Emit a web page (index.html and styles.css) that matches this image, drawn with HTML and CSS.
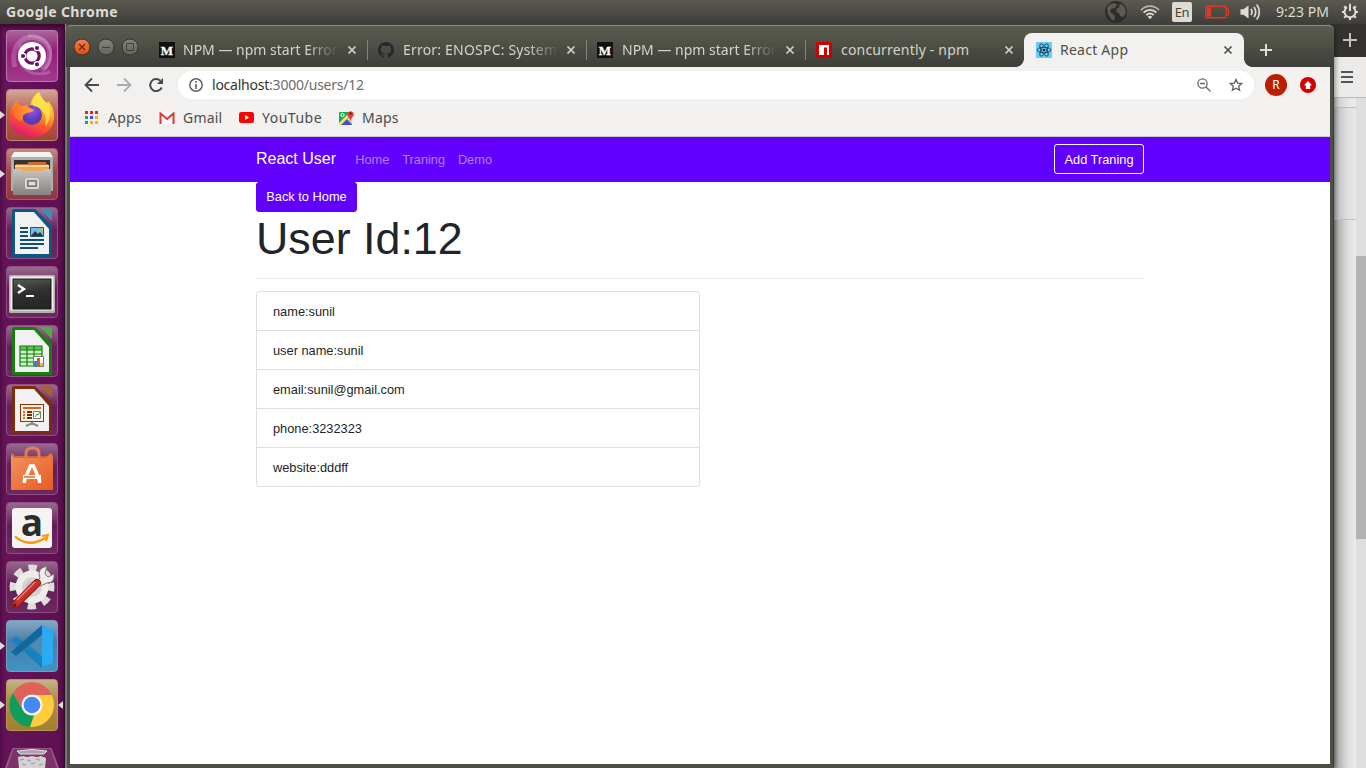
FILE: index.html
```html
<!DOCTYPE html>
<html lang="en">
<head>
<meta charset="utf-8">
<title>React App</title>
<link rel="stylesheet" href="styles.css">
</head>
<body>
<div class="desktop">
  <header class="panel">
    <span class="panel-title">Google Chrome</span>
    <div class="indicators">
      <svg class="ind-globe" width="22" height="22" viewBox="0 0 22 22"><circle cx="11" cy="11" r="11" fill="#2d2c29"/><path d="M2 7l3-4 5-1 2 2-2 3-4 1-1 3 3 2 2 2-1 5-3-2-3-5zM13 4l4-1 3 4 1 5-3 4-3-1-1-3-3-1 1-4 3-1z" fill="#5a5954"/></svg>
      <svg class="ind-wifi" width="20" height="16" viewBox="0 0 20 16" fill="none" stroke-linecap="butt"><path d="M1 6.2C6 .8 14 .8 19 6.2" stroke="#b9b5aa" stroke-width="1.7"/><path d="M3.6 8.7c3.6-3.8 9.2-3.8 12.8 0" stroke="#dfdbd2" stroke-width="1.9"/><path d="M6.3 11.2c2.2-2.1 5.2-2.1 7.4 0" stroke="#dfdbd2" stroke-width="1.8"/><path d="M7.7 12.7Q10 11 12.300 12.700L10 15.200z" fill="#dfdbd2"/></svg>
      <span class="ind-lang">En</span>
      <svg class="ind-battery" width="24" height="14" viewBox="0 0 24 14"><rect x=".8" y="1.200" width="20.400" height="11.600" rx="1" fill="none" stroke="#e0382b" stroke-width="1.400"/><path d="M2 2.500h4v9H2z" fill="#e0382b"/><path d="M21 4h1.500q1 0 1 1v4q0 1-1 1H21" fill="none" stroke="#e0382b" stroke-width="1.300"/></svg>
      <svg class="ind-sound" width="21" height="18" viewBox="0 0 21 18"><path d="M.5 6.300h3L8.500 2.500v13l-5-3.800h-3z" fill="#dfdbd2"/><path d="M11 6q2 3 0 6M14 4q3.500 5 0 10M16.800 1.500q5 7.500 0 15" fill="none" stroke="#dfdbd2" stroke-width="1.700"/></svg>
      <span class="clock">9:23 PM</span>
      <svg class="ind-gear" width="18" height="18" viewBox="0 0 18 18" fill="none"><g stroke="#dfdbd2" stroke-width="2.200"><path d="M9 14.500v2.500M1 9h2.500M14.500 9H17M3.200 3.200L5 5M13 5l1.800-1.800M3.200 14.800L5 13M13 13l1.800 1.800"/><path d="M6 4.200a5.500 5.500 0 1 0 6 0" stroke-width="2"/><path d="M9 .8V8" stroke-width="2"/></g></svg>
    </div>
  </header>
  <div class="session">
    <nav class="launcher">
      <div class="tile ubuntu"><svg viewBox="0 0 52 52"><g fill="none" stroke="#fff" stroke-opacity=".2"><path stroke-width="5" d="M9 37C3 14 20 2 35 10c14 7 8 25 1 30"/><path stroke-width="3" d="M15 15c-8 20 9 34 29 27M22 6c22-3 29 21 17 33"/></g><circle cx="26" cy="26" r="14" fill="#fff"/><circle cx="26" cy="26" r="7.200" fill="none" stroke="#71135f" stroke-width="3.200"/><g fill="#71135f" stroke="#fff" stroke-width="1.200"><circle cx="17" cy="26" r="2.700"/><circle cx="31" cy="18" r="2.700"/><circle cx="31" cy="34.300" r="2.700"/></g></svg></div>
      <div class="tile firefox running"><svg viewBox="0 0 52 52"><defs><linearGradient id="ff" x1=".8" y1="0" x2=".35" y2="1"><stop stop-color="#fff04f"/><stop offset=".35" stop-color="#ffb52e"/><stop offset=".65" stop-color="#ff592c"/><stop offset="1" stop-color="#e31573"/></linearGradient><linearGradient id="fox" x2="1"><stop stop-color="#ff6d2f"/><stop offset="1" stop-color="#ffa824"/></linearGradient><radialGradient id="fp" cy=".3"><stop stop-color="#9653f5"/><stop offset="1" stop-color="#593db5"/></radialGradient></defs><path d="M11 11q1 4 4 6l9-1q2-9 9-13 2 7 8 11l1-2q7 7 6 18C47 41 38 48 26 48S3 40 3 29q0-9 5-13z" fill="url(#ff)"/><circle cx="26" cy="26" r="10" fill="url(#fp)"/><path d="M11 11q1 5 5 7 6-2 8 1l4 2q-1 2-7 3-3 1-4 3 0 4-2 5-7-2-8-10z" fill="url(#fox)"/><path d="M33 3q3 8 10 13 4 12-4 22 2-8-1-14-3-6-11-7-3-7 6-14z" fill="#ffe54a" opacity=".85"/></svg></div>
      <div class="tile files running"><svg viewBox="0 0 52 52"><defs><linearGradient id="fm" x2="0" y2="1"><stop stop-color="#c6c4c2"/><stop offset="1" stop-color="#858381"/></linearGradient></defs><path d="M8 4h36l3 5H5z" fill="#f4f3f1"/><path d="M5 9h42v34H5z" fill="#b1afac"/><path d="M8 12h36v12H8z" fill="#34332f"/><path d="M10 16h11l2-2h17v2h2v7H10z" fill="#d36a30"/><path d="M9 17h34v2H9z" fill="#ffdda0"/><path d="M9 19h34v4H9z" fill="#f4a650"/><path d="M7 21h8l2 2h19l2-2h7v26H7z" fill="url(#fm)"/><rect x="20" y="31" width="12" height="9" rx="1" fill="none" stroke="#d8d6d4" stroke-width="2"/><rect x="22" y="33" width="8" height="5" fill="#ddd" stroke="#555" stroke-width="1"/></svg></div>
      <div class="tile office"><svg viewBox="0 0 52 52"><path d="M8 2h21l17 17v29q0 2-2 2H8q-2 0-2-2V4q0-2 2-2z" fill="#0b5788"/><path d="M34 2h10q2 0 2 2v10z" fill="#3a8fba"/><path d="M9 5h19l15 17v25H9z" fill="#f1f1f1"/><path d="M14 21h8M14 25h8M14 29h8M14 33h24M14 37h24M14 41h18" stroke="#0d4f78" stroke-width="2"/><path d="M24.500 20.500h13v9h-13z" fill="#79bce8" stroke="#135680"/><path d="M25 29l4-5 3 3 2-2 3 4z" fill="#333"/><path d="M34 21h3v3z" fill="#d9c832"/></svg></div>
      <div class="tile office"><svg viewBox="0 0 52 52"><defs><linearGradient id="tb" y2="1" x2=".2"><stop stop-color="#5b5b59"/><stop offset=".5" stop-color="#30302f"/><stop offset="1" stop-color="#262626"/></linearGradient></defs><rect x="3" y="9" width="46" height="38" rx="1.500" fill="#b2b1af"/><rect x="4.500" y="10.500" width="43" height="34" fill="#f1f1ef"/><rect x="7" y="13" width="38" height="30" fill="url(#tb)" stroke="#171717"/><path d="M12 19l6 4-6 4" fill="none" stroke="#fff" stroke-width="2.400"/><path d="M20 30h8" stroke="#fff" stroke-width="2"/></svg></div>
      <div class="tile office"><svg viewBox="0 0 52 52"><path d="M8 2h21l17 17v29q0 2-2 2H8q-2 0-2-2V4q0-2 2-2z" fill="#16800f"/><path d="M34 2h10q2 0 2 2v10z" fill="#4caf3c"/><path d="M9 5h19l15 17v25H9z" fill="#f1f1f1"/><path d="M14 21h22v20H14z" fill="#c9f7c3"/><path d="M14 21h22v4H14z" fill="#5ec653"/><path d="M14 21h22v20H14zM14 25h22M14 29h22M14 33h22M14 37h22M21 21v20M28 21v20" fill="none" stroke="#137a0d" stroke-width="1.200"/><path d="M27.500 31.500h10v10h-10z" fill="#fff" stroke="#777"/><path d="M28 36h3v5h-3z" fill="#2b87d2"/><path d="M31 33h3v8h-3z" fill="#d65d1c"/><path d="M34 38h3v3h-3z" fill="#f4be23"/></svg></div>
      <div class="tile office"><svg viewBox="0 0 52 52"><path d="M8 2h21l17 17v29q0 2-2 2H8q-2 0-2-2V4q0-2 2-2z" fill="#7e2d08"/><path d="M34 2h10q2 0 2 2v10z" fill="#ae5d31"/><path d="M9 5h19l15 17v25H9z" fill="#f1f1f1"/><rect x="14.500" y="20.500" width="23" height="17" fill="#fff2e6" stroke="#8e3308"/><path d="M17 24h18" stroke="#d36424" stroke-width="2"/><path d="M17 28h2M17 31h2M17 34h2" stroke="#e0682b" stroke-width="2"/><path d="M21 28h5M21 31h5M21 34h5" stroke="#7c2d08" stroke-width="2"/><path d="M27.500 27.500h7v7h-7z" fill="#fff" stroke="#777"/><path d="M29 33l2-3 1 1 2-3" fill="none" stroke="#35a53c"/><path d="M26 38v3M20 42l6-3 6 3" stroke="#888" stroke-width="2" fill="none"/></svg></div>
      <div class="tile office"><svg viewBox="0 0 52 52"><defs><linearGradient id="bag" x2="1" y2="1"><stop stop-color="#f29460"/><stop offset="1" stop-color="#e75b22"/></linearGradient></defs><path d="M5 10l4 3h31l5-3 2 4v33H5z" fill="url(#bag)"/><path d="M5 11l3 3h31l5-3" fill="none" stroke="#b84a1d"/><path d="M20 18V11q0-6 6-6h1q6 0 6 6v7" fill="none" stroke="#e57f51" stroke-width="2.800"/><path d="M18.500 40v-3l6-14h3l6 14v3" fill="none" stroke="#fff" stroke-width="3.500"/><path d="M17 34h18" stroke="#fff" stroke-width="4"/><path d="M18 34h11" stroke="#ef5e22" stroke-width="1.500"/></svg></div>
      <div class="tile office"><svg viewBox="0 0 52 52"><rect x="6" y="6" width="40" height="40" rx="3" fill="#f5f4f2"/><text class="amazon-a" x="26" y="34">a</text><path d="M9 34.500q14 12 31 1" fill="none" stroke="#ff9300" stroke-width="2.300"/><path d="M36 34l6-1-2 6" fill="none" stroke="#ff9300" stroke-width="2"/></svg></div>
      <div class="tile office"><svg viewBox="0 0 52 52"><circle cx="26" cy="26" r="19" fill="none" stroke="#deddda" stroke-width="7" stroke-dasharray="8 6.920" transform="rotate(-12 26 26)"/><circle cx="26" cy="26" r="16.500" fill="#eeedea"/><circle cx="26" cy="26" r="10" fill="#d5d3d0"/><circle cx="26" cy="26" r="6" fill="#cbb7c7"/><path d="M34 17q-4-9 7-12l-2 8 3 3 6-3q1 9-7 9l-7 3-5-3z" fill="#eeedea" stroke="#777"/><path d="M31 22L10 43" stroke="#8e1713" stroke-width="8" stroke-linecap="round"/><path d="M31 22L10 43" stroke="#c8302a" stroke-width="6" stroke-linecap="round"/><path d="M29 21L11 39" stroke="#ef837d" stroke-width="1.500"/><circle cx="9" cy="44" r="1.600" fill="#681310"/></svg></div>
      <div class="tile vscode running"><svg viewBox="0 0 52 52"><path d="M5 20l5-4 29 23-3 9z" fill="#1681bf"/><path d="M5 32l5 4 28-23-2-8z" fill="#12679c"/><path d="M36 5l11 5v33l-11 4z" fill="#2baaf0"/><path d="M36 17L25 26l11 9z" fill="#4c8cb5"/></svg></div>
      <div class="tile chrome running focused"><svg viewBox="0 0 52 52"><circle cx="26" cy="26" r="22" fill="#ffcc3e"/><path d="M7 14A22 22 0 0 1 46 16H26L17 31z" fill="#df625a"/><path d="M7 14l10 17q4 6 11 5l-4 12A22 22 0 0 1 7 14z" fill="#109c59"/><circle cx="26" cy="26" r="10.500" fill="#f6f6f6"/><circle cx="26" cy="26" r="8.300" fill="#4688f2"/></svg></div>
      <div class="trash"><svg width="54" height="21" viewBox="0 0 54 21"><path d="M7.500 1h39L54 21H0z" fill="#9b5b8a"/><path d="M8.500 2h37L52 21H2z" fill="#793468"/><path d="M12 4q15-3 30 0l-3 3H15z" fill="#a9a4a8" stroke="#e5e1e4"/><path d="M13 10l5-1 4 1 5-1 5 1 4-1 5 2-1 10H14z" fill="#d5d1d5"/><path d="M15 13l4-1M22 13l4 1M31 12l4 1M17 17l4 1M26 17l4-1M34 18l4-1" stroke="#aaa5a9" stroke-width="1.500"/></svg></div>
    </nav>
    <main class="workspace">
      <aside class="back-window"><div class="back-tabs"><svg width="14" height="14"><path d="M7 0v14M0 7h14" stroke="#c2c1bd" stroke-width="2"/></svg></div><div class="back-toolbar"><svg width="12" height="12"><path d="M0 1h12M0 6h12M0 11h12" stroke="#555" stroke-width="1.800"/></svg></div><div class="back-page"><div class="back-content"></div><div class="scrollbar"><div class="thumb"></div></div></div></aside>
      <section class="window">
        <div class="tabstrip">
          <div class="controls"><svg width="64" height="18" viewBox="0 0 64 18"><defs><linearGradient id="close" y2="1" x2="0"><stop stop-color="#f68058"/><stop offset="1" stop-color="#df4b0b"/></linearGradient><linearGradient id="ctl" y2="1" x2="0"><stop stop-color="#85857d"/><stop offset="1" stop-color="#62635c"/></linearGradient></defs><circle cx="8" cy="9" r="8" fill="url(#close)" stroke="#373530"/><g stroke="#373530"><circle cx="32" cy="9" r="8" fill="url(#ctl)"/><circle cx="56" cy="9" r="8" fill="url(#ctl)"/></g><path d="M5 6l6 6M11 6l-6 6" stroke="#64290f" stroke-width="1.300"/><path d="M28 9.500h8M52.500 5.500h7v7h-7z" fill="none" stroke="#3f403a"/></svg></div>
          <div class="tab"><svg class="favicon" viewBox="0 0 16 16"><rect width="16" height="16" fill="#11120f"/><text class="medium-m" x="8" y="12.500">M</text></svg><span class="tab-label">NPM — npm start Error</span><svg class="tab-close" viewBox="0 0 10 10"><path d="M1.500 1.500l7 7M8.500 1.500l-7 7"/></svg></div>
          <div class="tab"><svg class="favicon" viewBox="0 0 16 16"><path fill="#25292c" d="M8 0C3.600 0 0 3.600 0 8c0 3.500 2.300 6.500 5.500 7.600.4.100.5-.2.500-.4v-1.400c-2.200.5-2.700-1-2.700-1-.4-.9-.9-1.200-.9-1.200-.7-.5.100-.5.100-.5.800.1 1.200.8 1.200.8.700 1.300 1.900.9 2.300.7.100-.5.300-.9.500-1.100-1.800-.2-3.600-.9-3.600-4 0-.9.300-1.600.8-2.200-.1-.2-.4-1 .1-2.100 0 0 .7-.2 2.200.8a7.500 7.500 0 0 1 4 0c1.500-1 2.200-.8 2.200-.8.400 1.100.2 1.900.1 2.100.5.600.8 1.300.8 2.200 0 3.100-1.900 3.800-3.700 4 .3.200.6.700.6 1.500v2.200c0 .2.100.5.500.4A8 8 0 0 0 8 0z"/></svg><span class="tab-label system">Error: ENOSPC: System</span><svg class="tab-close" viewBox="0 0 10 10"><path d="M1.500 1.500l7 7M8.500 1.500l-7 7"/></svg></div>
          <div class="tab"><svg class="favicon" viewBox="0 0 16 16"><rect width="16" height="16" fill="#11120f"/><text class="medium-m" x="8" y="12.500">M</text></svg><span class="tab-label third">NPM — npm start Error</span><svg class="tab-close" viewBox="0 0 10 10"><path d="M1.500 1.500l7 7M8.500 1.500l-7 7"/></svg></div>
          <div class="tab last"><svg class="favicon" viewBox="0 0 16 16"><rect width="16" height="16" fill="#cb0000"/><path d="M3 3h10v10h-2V5.500H8V13H3z" fill="#fff"/></svg><span class="tab-label full">concurrently - npm</span><svg class="tab-close" viewBox="0 0 10 10"><path d="M1.500 1.500l7 7M8.500 1.500l-7 7"/></svg></div>
          <div class="tab active"><svg class="favicon" viewBox="0 0 16 16"><rect width="16" height="16" rx="1" fill="#61cffa"/><g fill="none" stroke="#20323b" stroke-width=".8"><ellipse cx="8" cy="8" rx="7" ry="2.700"/><ellipse cx="8" cy="8" rx="7" ry="2.700" transform="rotate(60 8 8)"/><ellipse cx="8" cy="8" rx="7" ry="2.700" transform="rotate(120 8 8)"/></g><circle cx="8" cy="8" r="1.300" fill="#20323b"/></svg><span class="tab-label full react">React App</span><svg class="tab-close" viewBox="0 0 10 10"><path d="M1.500 1.500l7 7M8.500 1.500l-7 7"/></svg></div>
          <svg class="new-tab" width="12" height="12"><path d="M6 0v12M0 6h12" stroke="#deddd3" stroke-width="2"/></svg>
        </div>
        <div class="toolbar">
          <svg class="nav-arrow" width="16" height="16" viewBox="0 0 16 16"><path d="M15 8H2M8 1.500L1.500 8 8 14.500" fill="none" stroke="#494949" stroke-width="1.800"/></svg>
          <svg class="nav-arrow" width="16" height="16" viewBox="0 0 16 16"><path d="M1 8h13M8 1.500L14.500 8 8 14.500" fill="none" stroke="#acacac" stroke-width="1.800"/></svg>
          <svg class="reload" width="16" height="16" viewBox="0 0 16 16"><path d="M13.700 10.500A6 6 0 1 1 12.300 3.700" fill="none" stroke="#494949" stroke-width="2"/><path d="M15 1v6H9z" fill="#494949"/></svg>
          <div class="address"><svg width="14" height="14" viewBox="0 0 14 14"><circle cx="7" cy="7" r="6.200" fill="none" stroke="#646464" stroke-width="1.500"/><path d="M7 3v1.800M7 6v5" stroke="#646464" stroke-width="1.600"/></svg><span class="url"><b>localhost</b>:3000/users/12</span><svg class="zoom-icon" width="15" height="15" viewBox="0 0 15 15" fill="none" stroke="#696969"><circle cx="5.500" cy="5.500" r="4.600" stroke-width="1.300"/><path d="M3 5.500h5M9 9l4.500 4.500" stroke-width="1.400"/></svg><svg width="14" height="14" viewBox="0 0 14 14"><path d="M7 1.500l1.700 3.700 4 .4-3 2.700.9 4L7 10.300l-3.600 2 .9-4-3-2.700 4-.4z" fill="none" stroke="#5f5f5f" stroke-width="1.300"/></svg></div>
          <span class="avatar">R</span>
          <svg class="update" width="16" height="16" viewBox="0 0 16 16"><circle cx="8" cy="8" r="8" fill="#d40000"/><path d="M8 4l4 4.200H10.200V12H5.800V8.200H4z" fill="#fff"/></svg>
        </div>
        <div class="bookmarks">
          <div class="bookmark apps"><svg width="13" height="13" viewBox="0 0 13 13"><path d="M0 0h3v3H0zM5 0h3v3H5zM10 0h3v3h-3z" fill="#ed2027"/><path d="M0 5h3v3H0zM0 10h3v3H0z" fill="#12ad54"/><path d="M5 5h3v3H5z" fill="#5b3cff"/><path d="M10 5h3v3h-3zM5 10h3v3H5zM10 10h3v3h-3z" fill="#edb900"/></svg><span>Apps</span></div>
          <div class="bookmark gmail"><svg width="16" height="12" viewBox="0 0 16 12"><path d="M1 0h14v12H1z" fill="#fafafa"/><path d="M1.500 12V1.500L8 7l6.500-5.500V12" fill="none" stroke="#db3a32" stroke-width="2"/></svg><span>Gmail</span></div>
          <div class="bookmark youtube"><svg width="15" height="11" viewBox="0 0 15 11"><rect width="15" height="11" rx="2.500" fill="#f00"/><path d="M6 3l4 2.500L6 8z" fill="#fff"/></svg><span>YouTube</span></div>
          <div class="bookmark maps"><svg width="16" height="16" viewBox="0 0 16 16"><rect x="0" y="2" width="13" height="13" rx="1" fill="#1aab55"/><path d="M2 15l5-6 6 6z" fill="#5146d7"/><path d="M0 13L11 2h2v2L2 15H0z" fill="#f5e565"/><path d="M8 9l5 5V7z" fill="#ddd"/><circle cx="3.500" cy="5" r="1.600" fill="none" stroke="#fff"/><path d="M11.500 12Q11 8 8.700 6a3.200 3.200 0 1 1 5.600 0q-2.300 2-2.800 6z" fill="#e83a31"/><circle cx="11.500" cy="3.500" r="1.200" fill="#8f1519"/></svg><span>Maps</span></div>
        </div>
        <div class="page">
          <nav class="navbar"><div class="container nav-row"><a class="brand">React User</a><a class="link">Home</a><a class="link">Traning</a><a class="link">Demo</a><button class="btn outline">Add Traning</button></div></nav>
          <div class="container"><button class="btn primary">Back to Home</button><h1>User Id:12</h1><hr><ul class="details"><li>name:sunil</li><li>user name:sunil</li><li>email:sunil@gmail.com</li><li>phone:3232323</li><li>website:dddff</li></ul></div>
        </div>
      </section>
    </main>
  </div>
</div>
</body>
</html>
```
FILE: styles.css
```css
* { box-sizing: border-box; }
body { margin: 0; overflow: hidden; font-family: "Noto Sans", sans-serif; font-size: 14px; }
svg { display: block; flex: none; }
.desktop { width: 1366px; height: 768px; display: flex; flex-direction: column; overflow: hidden; }
.panel { height: 24px; flex: none; display: flex; align-items: center; justify-content: space-between; padding: 0 7px 0 6px; background: linear-gradient(#5b5a50, #3e3d39); color: #dfdbd2; }
.panel-title { font-weight: 700; font-size: 14px; letter-spacing: .34px; padding-bottom: 2px; }
.indicators { display: flex; align-items: center; }
.ind-wifi { margin-left: 13px; }
.ind-lang { width: 20px; height: 20px; line-height: 21px; margin-left: 12px; border-radius: 2px; background: #dfdbd2; color: #45433d; font-size: 13px; text-align: center; letter-spacing: -.4px; }
.ind-battery { margin-left: 13px; }
.ind-sound { margin-left: 11px; }
.clock { margin-left: 15px; width: 54px; font-size: 14px; letter-spacing: .05px; padding-bottom: 2px; white-space: nowrap; }
.ind-gear { margin-left: 11px; }
.session { flex: 1; min-height: 0; display: flex; }
.launcher { width: 64px; flex: none; padding: 6px 6px 0; display: flex; flex-direction: column; gap: 7px; overflow: hidden; background: linear-gradient(90deg, #65145a, #5e1051); box-shadow: inset 0 3px 5px #35072b; }
.tile { position: relative; width: 52px; height: 52px; flex: none; border: 1px solid #8d5080; border-radius: 4px; background: linear-gradient(#98698e, #641d56 45%, #6d2861); }
.tile svg { width: 52px; height: 52px; margin: -1px; }
.amazon-a { font: 700 37px "Open Sans", sans-serif; text-anchor: middle; fill: #2c2c2c; }
.ubuntu { background: linear-gradient(#a8659c, #941c7b 40%, #a13a8c); border-color: #ba78af; }
.firefox { background: linear-gradient(#d4a79c, #b45e4e 45%, #a24738); border-color: #c38470; }
.files { background: linear-gradient(#bd8d8c, #9c474a 45%, #903841); border-color: #a9595f; }
.vscode { background: linear-gradient(#87a8c2, #487ea9 40%, #4293c2); border-color: #759ebf; }
.chrome { background: linear-gradient(#c4b486, #aa8d4c 40%, #a28032); border-color: #b99b50; }
.running::before, .focused::after { content: ""; position: absolute; top: 21px; border: 4px solid transparent; }
.running::before { left: -7px; border-left: 5px solid #ded9dc; border-right: 0; }
.focused::after { right: -6px; border-right: 5px solid #ded9dc; border-left: 0; }
.trash { height: 21px; margin: 9px 0 0 -1px; flex: none; }
.workspace { position: relative; flex: 1; min-width: 0; background: linear-gradient(90deg, #3d1337 0 1px, #9a949a 1px 2px, #50514c 2px); overflow: hidden; }
.back-window { position: absolute; top: 0; right: 0; width: 36px; height: 744px; display: flex; flex-direction: column; background: #e8e8e8; }
.back-tabs { height: 33px; flex: none; padding: 9px 0 0 13px; background: #34332f; }
.back-toolbar { height: 41px; flex: none; padding: 14px 0 0 11px; background: #ecebea; border-bottom: 1px solid #b9b9b9; }
.back-page { flex: 1; display: flex; background: linear-gradient(90deg, #939393 0 4px, #b4b4b4 8px, #ddd 18px, #ececec 26px); }
.back-content { flex: 1; height: 122px; border-bottom: 1px solid #bfc0c4; background: linear-gradient(#ededed80 0 9px, #b9bbc0 9px 10px, #dfe3e860 10px); }
.scrollbar { width: 10px; background: #dedede; padding-top: 158px; }
.thumb { height: 283px; background: #b2b2b2; }
.window { position: absolute; left: 2px; top: 1px; width: 1268px; height: 743px; padding: 0 4px 4px; display: flex; flex-direction: column; background: linear-gradient(90deg, #797d73 0 1px, #4d4e45 1px 1267px, #3b3c35 1267px); border-radius: 5px 5px 1px 1px; box-shadow: 0 1px 6px #0009; }
.tabstrip { height: 42px; flex: none; margin: 0 -4px; display: flex; align-items: flex-end; background: linear-gradient(#5c5d51, #3d3e38); border-top: 1px solid #8a8a80; border-radius: 5px 5px 0 0; }
.controls { width: 82px; flex: none; padding: 0 0 11px 8px; }
.tab { position: relative; width: 219px; height: 34px; flex: none; padding: 0 10px 0 11px; display: flex; align-items: center; color: #d5d3c8; }
.tab:not(.last):not(.active)::after { content: ""; position: absolute; right: -1px; top: 7px; width: 1px; height: 20px; background: #84847a; }
.favicon { width: 16px; height: 16px; margin-right: 8px; }
.medium-m { font-family: "Liberation Serif", serif; font-weight: 700; font-size: 13px; text-anchor: middle; fill: #fff; stroke: #fff; stroke-width: .3px; }
.tab-label { width: 155px; white-space: nowrap; overflow: hidden; line-height: 20px; -webkit-mask-image: linear-gradient(90deg, #000 80%, transparent); mask-image: linear-gradient(90deg, #000 80%, transparent); }
.tab-label.system { padding-left: 1px; width: 157px; letter-spacing: .2px; }
.tab-label.third { padding-left: 1px; }
.tab-label.full { padding-left: 1px; letter-spacing: .18px; -webkit-mask-image: none; mask-image: none; }
.tab-label.react { padding-left: 0; letter-spacing: .25px; }
.tab-close { width: 10px; height: 10px; margin-left: auto; stroke: currentColor; stroke-width: 1.700; }
.active { width: 220px; padding-left: 12px; padding-right: 11px; background: #f2f1f0; border-radius: 8px 8px 0 0; color: #4e4e4b; }
.active::before, .active::after { content: ""; position: absolute; bottom: 0; width: 8px; height: 8px; }
.active::before { left: -8px; background: radial-gradient(circle at 0 0, transparent 7.500px, #f2f1f0 8px); }
.active::after { right: -8px; background: radial-gradient(circle at 100% 0, transparent 7.500px, #f2f1f0 8px); }
.new-tab { margin: 0 0 11px 16px; }
.toolbar { height: 36px; flex: none; display: flex; align-items: center; padding: 0 14px; background: #f2f1f0; }
.nav-arrow { margin-right: 16px; }
.reload { margin-right: 14px; }
.address { width: 1076px; height: 28px; padding: 0 11px; display: flex; align-items: center; border-radius: 14px; background: #fff; }
.url { margin-left: 9px; color: #6c6c6c; letter-spacing: -.23px; padding-bottom: 2px; }
.url b { color: #333; font-weight: 400; }
.zoom-icon { margin: 1px 17px 0 auto; }
.avatar { margin-left: 11px; width: 22px; height: 22px; border-radius: 50%; background: #bb1d00; color: #fff; text-align: center; font-size: 12px; line-height: 22px; }
.update { margin-left: 13px; }
.bookmarks { height: 34px; flex: none; display: flex; align-items: center; padding: 0 15px 4px; background: #f2f1f0; border-bottom: 1px solid #ccc9cf; color: #4c4c4c; }
.bookmark { display: flex; align-items: center; }
.bookmark span { white-space: nowrap; letter-spacing: .2px; }
.bookmark.apps span { margin-left: 10px; width: 51px; }
.bookmark.gmail span { margin-left: 8px; width: 56px; }
.bookmark.youtube span { margin-left: 8px; width: 77px; letter-spacing: .5px; }
.bookmark.maps span { margin-left: 7px; }
.page { flex: 1; min-height: 0; background: #fff; font: 12.800px "Liberation Sans", Arial, sans-serif; color: #212529; }
.navbar { height: 45px; background: #6200ff; }
.container { width: 888px; margin: 0 auto; }
.nav-row { height: 45px; display: flex; align-items: center; }
.brand { color: #fff; font-size: 16px; margin: -2px 19.200px 0 0; }
.link { color: #ffffff80; margin-right: 12.800px; }
.btn { height: 30px; border: 1px solid #6200ff; border-radius: 3px; font: 12.800px "Liberation Sans", Arial, sans-serif; color: #fff; background: #6200ff; }
.outline { margin: -2px 0 0 auto; width: 90px; padding: 1px 0 0; border-color: #fff; }
.primary { display: block; width: 101px; padding: 0 0 1px; }
h1 { margin: 0; padding-bottom: 2px; font-size: 44.800px; line-height: 52px; font-weight: 400; }
hr { margin: 12px 0; border: 0; border-top: 1px solid #e9e9e9; }
.details { width: 444px; margin: 0; padding: 0; list-style: none; border: 1px solid #dfdfdf; border-radius: 3px; }
.details li { height: 39px; padding: 0 16px; line-height: 40px; border-bottom: 1px solid #dfdfdf; }
.details li:last-child { border: 0; height: 38px; }
```
